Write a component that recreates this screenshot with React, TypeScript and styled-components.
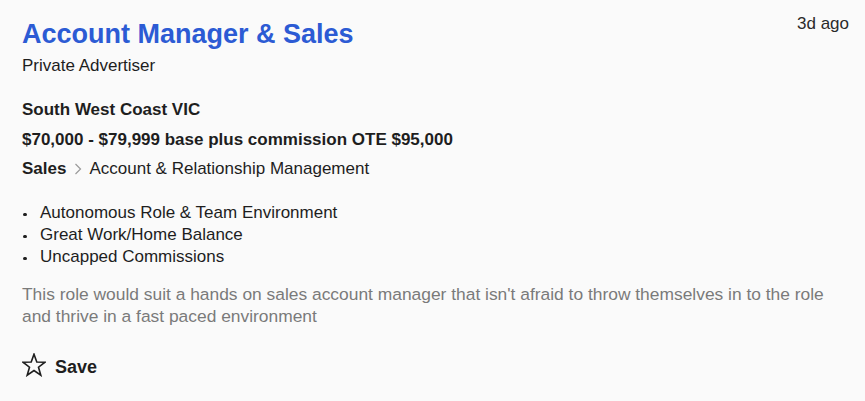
import React from "react";
import styled, { createGlobalStyle } from "styled-components";

const Global = createGlobalStyle`
  html, body { margin: 0; padding: 0; background: #fafafa; }
  body { font-family: "Liberation Sans", Arial, sans-serif; color: #1e1e1e; }
`;

const Card = styled.article`
  box-sizing: border-box;
  width: 865px;
  height: 401px;
  padding: 18px 16px 0 22px;
  background: #fafafa;
  display: flex;
  flex-direction: column;
`;

const Header = styled.header`
  display: flex;
  justify-content: space-between;
  align-items: flex-start;
`;

const Title = styled.h1`
  margin: 0;
  font-size: 27px;
  line-height: 32px;
  font-weight: 700;
  color: #2c5bd4;
`;

const Time = styled.span`
  font-size: 17px;
  line-height: 22px;
  color: #2a2a2a;
  margin-top: -5px;
`;

const Line = styled.div<{ $bold?: boolean; $gap: number }>`
  margin-top: ${(p) => p.$gap}px;
  font-size: 17px;
  line-height: 22px;
  font-weight: ${(p) => (p.$bold ? 700 : 400)};
`;

const Classification = styled.div`
  margin-top: 7px;
  font-size: 17px;
  line-height: 22px;
  display: flex;
  align-items: center;
  gap: 7px;
`;

const Strong = styled.span`
  font-weight: 700;
`;

const Chevron = styled.svg`
  width: 8px;
  height: 12px;
  color: #9a9a9a;
  margin-left: 1px;
`;

const Bullets = styled.ul`
  margin: 22px 0 0 0;
  padding: 0 0 0 18px;
  list-style: none;
`;

const Bullet = styled.li`
  position: relative;
  font-size: 17px;
  line-height: 22px;
  &::before {
    content: "";
    position: absolute;
    left: -17px;
    top: 10.5px;
    width: 3.5px;
    height: 3.5px;
    border-radius: 50%;
    background: #1e1e1e;
  }
`;

const Teaser = styled.p`
  margin: 15px 0 0 0;
  font-size: 17.4px;
  line-height: 22px;
  color: #7a7a7a;
`;

const SaveButton = styled.button`
  margin-top: 28px;
  align-self: flex-start;
  display: flex;
  align-items: flex-start;
  gap: 9px;
  background: none;
  border: 0;
  padding: 0;
  font-family: inherit;
  font-size: 18px;
  line-height: 24px;
  font-weight: 700;
  color: #1e1e1e;
  cursor: pointer;
`;

const Star = styled.svg`
  width: 24px;
  height: 24px;
  margin-top: -2px;
`;

export default function App() {
  return (
    <>
      <Global />
      <Card>
        <Header>
          <Title>Account Manager &amp; Sales</Title>
          <Time>3d ago</Time>
        </Header>
        <Line $gap={5}>Private Advertiser</Line>
        <Line $gap={22} $bold>South West Coast VIC</Line>
        <Line $gap={8} $bold>$70,000 - $79,999 base plus commission OTE $95,000</Line>
        <Classification>
          <Strong>Sales</Strong>
          <Chevron viewBox="0 0 8 12" fill="none" stroke="currentColor" strokeWidth="1.2">
            <path d="M1.5 1 L6.5 6 L1.5 11" />
          </Chevron>
          <span>Account &amp; Relationship Management</span>
        </Classification>
        <Bullets>
          <Bullet>Autonomous Role &amp; Team Environment</Bullet>
          <Bullet>Great Work/Home Balance</Bullet>
          <Bullet>Uncapped Commissions</Bullet>
        </Bullets>
        <Teaser>
          This role would suit a hands on sales account manager that isn't afraid to throw themselves in to the role
          and thrive in a fast paced environment
        </Teaser>
        <SaveButton>
          <Star viewBox="0 0 24 24" fill="none" stroke="#1e1e1e" strokeWidth="1.6" strokeLinejoin="miter">
            <path d="M12 1.2 L14.8 9 L23 9.2 L16.5 14.2 L18.8 22.2 L12 17.5 L5.2 22.2 L7.5 14.2 L1 9.2 L9.2 9 Z" />
          </Star>
          Save
        </SaveButton>
      </Card>
    </>
  );
}
